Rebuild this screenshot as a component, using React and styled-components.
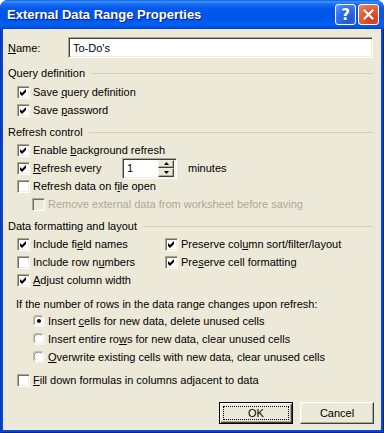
import React from 'react';
import styled, { createGlobalStyle } from 'styled-components';

const Global = createGlobalStyle`
  html, body { margin: 0; padding: 0; background: #fff; }
  body { font-family: "Liberation Sans", Arial, sans-serif; font-size: 11px; color: #000; }
`;

const Window = styled.div`
  width: 384px;
  height: 433px;
  display: flex;
  flex-direction: column;
  border-radius: 8px 8px 0 0;
  overflow: hidden;
  background: #0A4EDD;
`;

const TitleBar = styled.div`
  height: 29px;
  flex: none;
  display: flex;
  align-items: center;
  padding: 0 5px 0 7px;
  background: linear-gradient(to bottom, #0A5FE8 0%, #3D8FF6 6%, #1A6EF0 14%, #0058EE 30%, #0054E8 60%, #0060F4 86%, #0150E0 94%, #0040C8 100%);
`;

const Title = styled.div`
  flex: 1;
  color: #fff;
  font-family: "Liberation Sans", Arial, sans-serif;
  font-weight: bold;
  font-size: 13px;
  text-shadow: 1px 1px 0 #0A1A8C;
`;

const CapButton = styled.div`
  width: 21px;
  height: 21px;
  box-sizing: border-box;
  border: 1px solid #fff;
  border-radius: 3px;
  margin-left: 2px;
  display: flex;
  align-items: center;
  justify-content: center;
  color: #fff;
  font-family: "DejaVu Sans", sans-serif;
  font-weight: bold;
  font-size: 15px;
  background: ${p => p.$red
    ? 'radial-gradient(circle at 70% 80%, #D13A1C 0%, #E35A38 55%, #F08A6C 100%)'
    : 'radial-gradient(circle at 70% 80%, #1F55D8 0%, #2F6CEB 55%, #6A9BF5 100%)'};
`;

const Frame = styled.div`
  flex: 1;
  display: flex;
  padding: 0 3px 3px 3px;
  background: #0846D8;
  box-shadow: inset 1px 0 0 #0036B8, inset -1px 0 0 #00258F, inset 0 -1px 0 #00258F;
`;

const Body = styled.div`
  flex: 1;
  background: #ECE9D8;
  padding: 8px 7px 0 5px;
  display: flex;
  flex-direction: column;
`;

const NameRow = styled.div`
  display: flex;
  align-items: center;
  height: 21px;
`;

const NameLabel = styled.span`
  width: 60px;
  flex: none;
`;

const Sunken = styled.div`
  box-sizing: border-box;
  height: 21px;
  background: #fff;
  border: 1px solid;
  border-color: #ACA899 #fff #fff #ACA899;
  box-shadow: inset 1px 1px 0 #404040, inset -1px -1px 0 #F1EFE2;
  display: flex;
  align-items: center;
`;

const TextField = styled(Sunken)`
  flex: 1;
  margin-right: 1px;
  padding-left: 4px;
`;

const Header = styled.div`
  display: flex;
  align-items: center;
  height: 16px;
  margin-top: ${p => p.$mt}px;
  &::after {
    content: "";
    flex: 1;
    height: 1px;
    margin-left: 6px;
    margin-right: 1px;
    background: #D0D0BF;
  }
`;

const Row = styled.div`
  display: flex;
  align-items: center;
  height: 18px;
  margin-top: ${p => p.$mt || 0}px;
  margin-left: ${p => p.$indent || 0}px;
  color: ${p => (p.$disabled ? '#ACA899' : '#000')};
  white-space: nowrap;
`;

const Grid = styled.div`
  display: grid;
  grid-template-columns: 148px 1fr;
  grid-auto-rows: 18px;
  margin-top: ${p => p.$mt}px;
  margin-left: 9px;
`;

const Box = styled.span`
  width: 13px;
  height: 13px;
  box-sizing: border-box;
  flex: none;
  margin-right: 3px;
  background: ${p => (p.$disabled ? '#ECE9D8' : '#fff')};
  border: 1px solid;
  border-color: #ACA899 #fff #fff #ACA899;
  box-shadow: inset 1px 1px 0 #716F64, inset -1px -1px 0 #F1EFE2;
  display: flex;
  align-items: center;
  justify-content: center;
`;

const Label = styled.span`
  width: ${p => (p.$w ? `${p.$w}px` : 'auto')};
  flex: none;
`;

const U = styled.u`
  text-decoration: underline;
  text-underline-offset: 1px;
`;

const Spinner = styled(Sunken)`
  width: 55px;
  padding-left: 4px;
  padding-right: 2px;
  flex: none;
`;

const SpinValue = styled.span`
  flex: 1;
`;

const SpinButtons = styled.div`
  display: flex;
  flex-direction: column;
  width: 16px;
  height: 17px;
`;

const SpinBtn = styled.div`
  flex: 1;
  box-sizing: border-box;
  background: #ECE9D8;
  border: 1px solid;
  border-color: #F1EFE2 #404040 #404040 #F1EFE2;
  box-shadow: inset -1px -1px 0 #ACA899;
  display: flex;
  align-items: center;
  justify-content: center;
`;

const Minutes = styled.span`
  margin-left: 11px;
`;

const Para = styled.div`
  height: 16px;
  display: flex;
  align-items: center;
  margin-top: ${p => p.$mt}px;
  margin-left: 8px;
`;

const RadioIcon = styled.svg`
  flex: none;
  margin-right: 3px;
`;

const ButtonRow = styled.div`
  display: flex;
  justify-content: flex-end;
  gap: 7px;
  margin-top: 13px;
`;

const Button = styled.div`
  width: 74px;
  height: 22px;
  box-sizing: border-box;
  display: flex;
  padding: ${p => (p.$default ? '3px' : '0')};
  background: #ECE9D8;
  border: 1px solid;
  border-color: ${p => (p.$default ? '#000' : '#fff #404040 #404040 #fff')};
  box-shadow: ${p => (p.$default
    ? 'inset 1px 1px 0 #fff, inset -1px -1px 0 #404040, inset -2px -2px 0 #ACA899'
    : 'inset -1px -1px 0 #ACA899, inset 1px 1px 0 #F1EFE2')};
`;

const ButtonFace = styled.span`
  flex: 1;
  display: flex;
  align-items: center;
  justify-content: center;
  border: 1px dotted ${p => (p.$focus ? '#000' : 'transparent')};
`;

const Check = () => (
  <svg width="7" height="7" viewBox="0 0 7 7">
    <polygon points="0,2 2,4 6,0 6,3 2,7 0,5" fill="#000" />
  </svg>
);

const CheckRow = ({ checked, disabled, children, mt, indent = 9, w }) => (
  <Row $mt={mt} $indent={indent} $disabled={disabled}>
    <Box $disabled={disabled}>{checked && <Check />}</Box>
    <Label $w={w}>{children}</Label>
  </Row>
);

const GridItem = ({ checked, children }) => (
  <Row>
    <Box>{checked && <Check />}</Box>
    <Label>{children}</Label>
  </Row>
);

const Radio = ({ selected }) => (
  <RadioIcon width="12" height="12" viewBox="0 0 12 12">
    <circle cx="6" cy="6" r="5.5" fill="#fff" />
    <path d="M1.2 9.6 A5.5 5.5 0 0 1 9.6 1.2" fill="none" stroke="#ACA899" strokeWidth="1" />
    <path d="M2.3 8.6 A4.3 4.3 0 0 1 8.6 2.3" fill="none" stroke="#716F64" strokeWidth="1" />
    <path d="M10.8 2.4 A5.5 5.5 0 0 1 2.4 10.8" fill="none" stroke="#fff" strokeWidth="1" />
    <path d="M9.7 3.4 A4.3 4.3 0 0 1 3.4 9.7" fill="none" stroke="#F1EFE2" strokeWidth="1" />
    {selected && <circle cx="6" cy="6" r="2" fill="#000" />}
  </RadioIcon>
);

const RadioRow = ({ selected, children }) => (
  <Row $indent={25}>
    <Radio selected={selected} />
    <Label>{children}</Label>
  </Row>
);

const Arrow = ({ up }) => (
  <svg width="5" height="3" viewBox="0 0 5 3">
    <polygon points={up ? '2.5,0 5,3 0,3' : '0,0 5,0 2.5,3'} fill="#000" />
  </svg>
);

export default function App() {
  return (
    <>
      <Global />
      <Window>
        <TitleBar>
          <Title>External Data Range Properties</Title>
          <CapButton>?</CapButton>
          <CapButton $red>
            <svg width="11" height="11" viewBox="0 0 11 11">
              <path d="M1.5 1.5 L9.5 9.5 M9.5 1.5 L1.5 9.5" stroke="#fff" strokeWidth="2.2" strokeLinecap="square" />
            </svg>
          </CapButton>
        </TitleBar>
        <Frame>
          <Body>
            <NameRow>
              <NameLabel><U>N</U>ame:</NameLabel>
              <TextField>To-Do's</TextField>
            </NameRow>

            <Header $mt={7}>Query definition</Header>
            <CheckRow checked mt={2}>Save <U>q</U>uery definition</CheckRow>
            <CheckRow checked>Save <U>p</U>assword</CheckRow>

            <Header $mt={5}>Refresh control</Header>
            <CheckRow checked mt={1}>Enable <U>b</U>ackground refresh</CheckRow>
            <Row $indent={9}>
              <Box><Check /></Box>
              <Label $w={89}><U>R</U>efresh every</Label>
              <Spinner>
                <SpinValue>1</SpinValue>
                <SpinButtons>
                  <SpinBtn><Arrow up /></SpinBtn>
                  <SpinBtn><Arrow /></SpinBtn>
                </SpinButtons>
              </Spinner>
              <Minutes>minutes</Minutes>
            </Row>
            <CheckRow>Refresh data on f<U>i</U>le open</CheckRow>
            <CheckRow disabled indent={24}>Remove external data from worksheet before saving</CheckRow>

            <Header $mt={5}>Data formatting and layout</Header>
            <Grid $mt={1}>
              <GridItem checked>Include fi<U>e</U>ld names</GridItem>
              <GridItem checked>Preserve col<U>u</U>mn sort/filter/layout</GridItem>
              <GridItem>Include row n<U>u</U>mbers</GridItem>
              <GridItem checked>Pre<U>s</U>erve cell formatting</GridItem>
              <GridItem checked><U>A</U>djust column width</GridItem>
            </Grid>

            <Para $mt={7}>If the number of rows in the data range changes upon refresh:</Para>
            <RadioRow selected>Insert <U>c</U>ells for new data, delete unused cells</RadioRow>
            <RadioRow>Insert entire ro<U>w</U>s for new data, clear unused cells</RadioRow>
            <RadioRow><U>O</U>verwrite existing cells with new data, clear unused cells</RadioRow>

            <CheckRow mt={5}><U>F</U>ill down formulas in columns adjacent to data</CheckRow>

            <ButtonRow>
              <Button $default><ButtonFace $focus>OK</ButtonFace></Button>
              <Button><ButtonFace>Cancel</ButtonFace></Button>
            </ButtonRow>
          </Body>
        </Frame>
      </Window>
    </>
  );
}
